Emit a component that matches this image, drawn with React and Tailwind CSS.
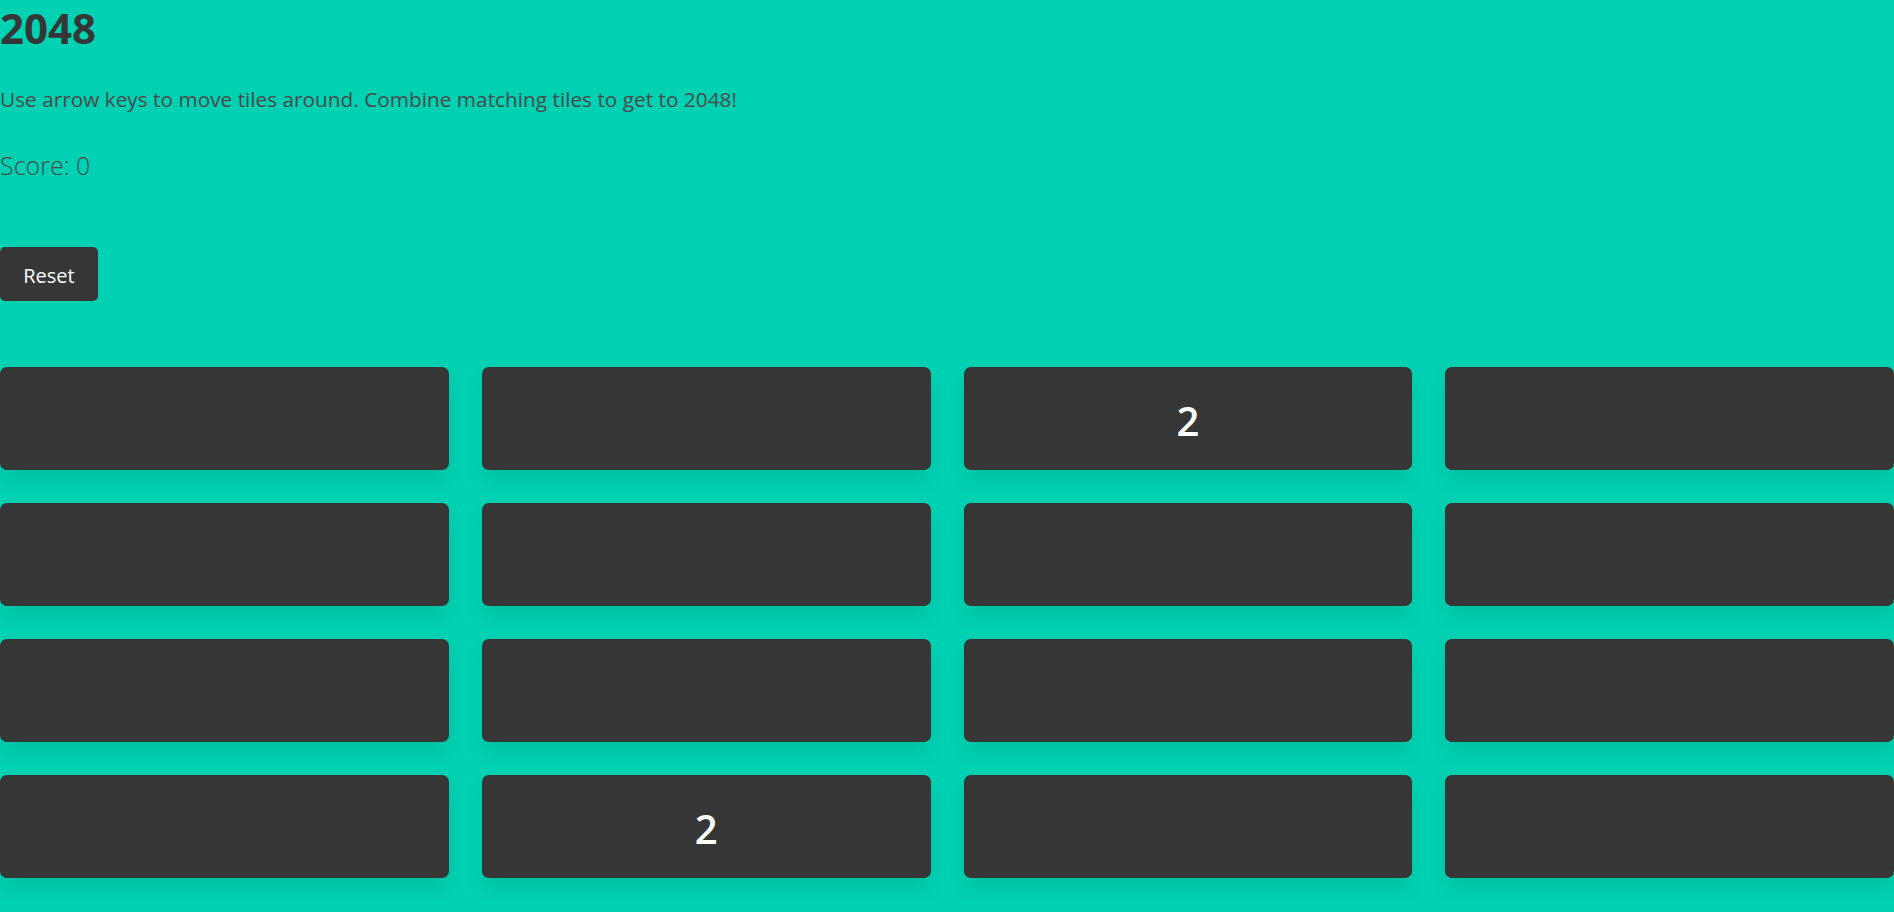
import React, { useState } from 'react';

const startBoard = [
  [0, 0, 2, 0],
  [0, 0, 0, 0],
  [0, 0, 0, 0],
  [0, 2, 0, 0],
];

const Tile = ({ value }) => (
  <div className="h-[103px] rounded-[7px] bg-[#363636] flex items-center justify-center shadow-[0_10px_20px_-2px_rgba(10,10,10,0.1)]">
    {value ? (
      <span className="pt-[5px] text-[40px] leading-none font-semibold text-white">{value}</span>
    ) : null}
  </div>
);

const App = () => {
  const [board, setBoard] = useState(startBoard);
  const [score, setScore] = useState(0);

  const reset = () => {
    setBoard(startBoard);
    setScore(0);
  };

  return (
    <div
      className="min-h-screen w-full bg-[#00d1b2]"
      style={{ fontFamily: '"Open Sans", "Noto Sans", sans-serif' }}
    >
      <h1 className="text-[42px] leading-[55px] font-bold text-[#363636]">2048</h1>
      <p className="mt-[29px] text-[20.8px] leading-[30px] text-[#4a4a4a]">
        Use arrow keys to move tiles around. Combine matching tiles to get to 2048!
      </p>
      <p className="mt-[36px] text-[25px] leading-[30px] font-light text-[#4a4a4a]">
        Score: {score}
      </p>
      <button
        onClick={reset}
        className="mt-[67px] block h-[54px] w-[98px] rounded-[5px] bg-[#363636] pt-[4px] text-[20px] text-white"
      >
        Reset
      </button>
      <div className="mt-[66px] grid grid-cols-4 gap-[33px]">
        {board.flat().map((v, i) => (
          <Tile key={i} value={v} />
        ))}
      </div>
    </div>
  );
};

export default App;
